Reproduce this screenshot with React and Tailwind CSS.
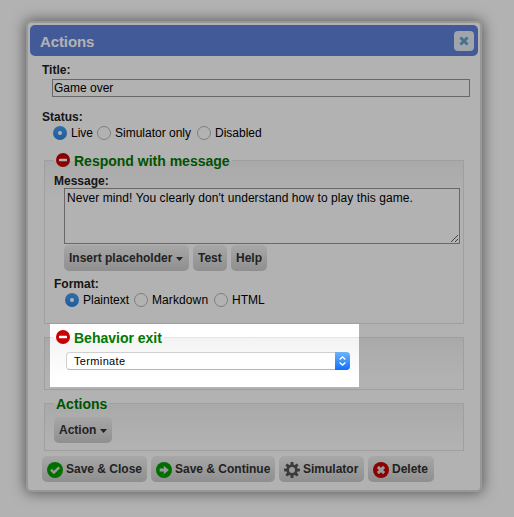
import React from "react";

function MinusIcon() {
  return (
    <svg className="block h-[14px] w-[14px] shrink-0" viewBox="0 0 14 14">
      <circle cx="7" cy="7" r="7" fill="#c80000" />
      <rect x="3" y="5.7" width="8" height="2.6" rx="0.6" fill="#fff" />
    </svg>
  );
}

function CheckIcon() {
  return (
    <svg className="mt-0.5 block h-4 w-4 shrink-0" viewBox="0 0 16 16">
      <circle cx="8" cy="8" r="8" fill="#00a000" />
      <path d="M4 7.7l2.9 2.9 5.3-5.2" fill="none" stroke="#ddd" strokeWidth="2.5" />
    </svg>
  );
}

function ArrowIcon() {
  return (
    <svg className="mt-0.5 block h-4 w-4 shrink-0" viewBox="0 0 16 16">
      <circle cx="8" cy="8" r="8" fill="#00a000" />
      <path d="M3.7 6.6h4.1V3.7L12.8 8l-5 4.3V9.4H3.7z" fill="#ddd" />
    </svg>
  );
}

function GearIcon() {
  return (
    <svg className="mt-0.5 block h-4 w-4 shrink-0" viewBox="0 0 16 16">
      <g fill="#555">
        {[0, 45, 90, 135].map((a) => (
          <path key={a} d="M6.7 0h2.6l.5 4h-3.6zM6.7 16h2.6l.5-4h-3.6z" transform={`rotate(${a} 8 8)`} />
        ))}
      </g>
      <circle cx="8" cy="8" r="4.3" fill="none" stroke="#555" strokeWidth="2.6" />
    </svg>
  );
}

function DeleteIcon() {
  return (
    <svg className="mt-0.5 block h-4 w-4 shrink-0" viewBox="0 0 16 16">
      <circle cx="8" cy="8" r="8" fill="#c80000" />
      <path d="M4.9 4.9l6.2 6.2M11.1 4.9l-6.2 6.2" stroke="#ddd" strokeWidth="2.9" />
    </svg>
  );
}

function Caret() {
  return (
    <svg className="mt-0.5 block h-1 w-[7px] shrink-0" viewBox="0 0 7 4">
      <path d="M0 0h7L3.5 4z" fill="#333" />
    </svg>
  );
}

function Button({ className, children }) {
  return (
    <button
      className={
        "flex h-[26px] shrink-0 items-center whitespace-nowrap rounded-[5px] bg-linear-to-b from-[#f0f0f0] to-[#cdcdcd] text-[12px] font-bold leading-[14px] text-[#323232] " +
        className
      }
    >
      {children}
    </button>
  );
}

function Radio({ checked, label, className }) {
  return (
    <label className={"flex h-[14px] shrink-0 items-center whitespace-nowrap text-[12px] leading-[14px] " + className}>
      <span
        className={
          "mr-1 flex h-[14px] w-[14px] shrink-0 items-center justify-center rounded-full " +
          (checked ? "bg-linear-to-b from-[#479fef] to-[#2e85e4]" : "border border-[#b6b6b6] bg-white")
        }
      >
        {checked && <span className="h-1 w-1 rounded-full bg-white" />}
      </span>
      {label}
    </label>
  );
}

function Panel({ title, icon, className, titleClass, children }) {
  return (
    <fieldset
      className={
        "ml-4 w-[420px] border border-[#e4e4e4] bg-linear-to-b from-[#f3f3f3] to-white to-[40px] " + className
      }
    >
      <legend className="ml-[9px] flex h-[15px] items-start whitespace-nowrap px-[2px] text-[14px] font-bold leading-4 text-[#007800]">
        {icon && <MinusIcon />}
        <span className={titleClass}>{title}</span>
      </legend>
      {children}
    </fieldset>
  );
}

export default function App() {
  return (
    <div className="relative h-[517px] w-[514px] overflow-hidden bg-white pl-[26px] pt-[21px] font-['Liberation_Sans',Arial,sans-serif] text-black">
      <div className="h-[471px] w-[456px] rounded-[5px] border-2 border-[#dadada] bg-white pt-[2px] shadow-[0_0_14px_1px_rgba(0,0,0,0.5)]">
        <header className="ml-[2px] flex h-[31px] w-[448px] items-center justify-between rounded-[5px] bg-[#6081dc] pl-[10px] pr-1">
          <h1 className="mt-px text-[15px] font-bold leading-[17px] tracking-[-0.1px] text-white">Actions</h1>
          <button className="mt-px flex h-5 w-5 items-center justify-center rounded-[4px] bg-[#e5edf6]">
            <svg className="block h-[10px] w-[10px]" viewBox="0 0 9 9">
              <path d="M1.3 1.3l6.4 6.4M7.7 1.3L1.3 7.7" stroke="#68a2cb" strokeWidth="2.7" />
            </svg>
          </button>
        </header>

        <p className="ml-[14px] mt-[7px] h-4 text-[12px] font-bold leading-[14px] text-[#222]">Title:</p>
        <div className="ml-6 flex h-[18px] w-[418px] items-center border border-[#969696] pl-px text-[12px] leading-[14px]">
          Game over
        </div>

        <p className="ml-[14px] mt-[13px] h-4 text-[12px] font-bold leading-[14px] text-[#222]">Status:</p>
        <div className="ml-[25px] flex">
          <Radio checked label="Live" className="w-11" />
          <Radio label="Simulator only" className="w-[100px]" />
          <Radio label="Disabled" className="" />
        </div>

        <Panel title="Respond with message" icon className="mt-[13px] h-[171px]" titleClass="ml-1">
          <p className="ml-[9px] mt-[6px] h-[14px] text-[12px] font-bold leading-[14px] text-[#222]">Message:</p>
          <div className="ml-[19px] flex h-14 w-[396px] justify-between border border-[#969696] bg-white">
            <p className="ml-[2px] mt-[2px] text-[12px] leading-[14px] tracking-[0.075px]">
              Never mind! You clearly don&apos;t understand how to play this game.
            </p>
            <svg className="mb-px mr-px mt-auto block h-[7px] w-[7px]" viewBox="0 0 7 7">
              <path d="M0 7L7 0M4 7l3-3" stroke="#555" strokeWidth="0.9" />
            </svg>
          </div>
          <div className="ml-[19px] mt-px flex gap-1">
            <Button className="w-[125px] gap-1 pl-[5px]">
              Insert placeholder
              <Caret />
            </Button>
            <Button className="w-[34px] pl-[5px]">Test</Button>
            <Button className="w-9 pl-[5px]">Help</Button>
          </div>
          <p className="ml-[9px] mt-[6px] h-4 text-[12px] font-bold leading-[14px] text-[#222]">Format:</p>
          <div className="ml-5 flex">
            <Radio checked label="Plaintext" className="w-[69px]" />
            <Radio label="Markdown" className="w-20 tracking-[0.1px]" />
            <Radio label="HTML" className="" />
          </div>
        </Panel>

        <Panel title="Behavior exit" icon className="mt-[6px] h-[60px]" titleClass="ml-1">
          <div className="ml-[21px] mt-[7px] flex h-[18px] w-[284px] items-center justify-between rounded-[4px] border border-b-[#b5b5b5] border-l-[#cfcfcf] border-r-[#cfcfcf] border-t-[#cfcfcf] bg-white pl-[7px] text-[11px] leading-[13px]">
            <span className="tracking-[0.35px]">Terminate</span>
            <span className="-my-px -mr-px flex h-[18px] w-[15px] items-center justify-center rounded-r-[4px] bg-linear-to-b from-[#6bb3fa] to-[#0b6ffb]">
              <svg className="block h-[10px] w-[7px]" viewBox="0 0 7 10">
                <path d="M.6 3.6L3.5.9l2.9 2.7M.6 6.4l2.9 2.7 2.9-2.7" fill="none" stroke="#fff" strokeWidth="1.3" />
              </svg>
            </span>
          </div>
        </Panel>

        <Panel title="Actions" className="mt-[6px] h-[55px]" titleClass="">
          <Button className="ml-[9px] mt-[6px] w-[58px] gap-1 pl-[5px]">
            Action
            <Caret />
          </Button>
        </Panel>

        <footer className="ml-[14px] mt-[5px] flex gap-1">
          <Button className="w-[105px] gap-[3px] pl-[5px]">
            <CheckIcon />
            Save &amp; Close
          </Button>
          <Button className="w-[124px] gap-[3px] pl-[5px]">
            <ArrowIcon />
            Save &amp; Continue
          </Button>
          <Button className="w-[85px] gap-[3px] pl-[5px]">
            <GearIcon />
            Simulator
          </Button>
          <Button className="w-[66px] gap-[3px] pl-[5px]">
            <DeleteIcon />
            Delete
          </Button>
        </footer>
      </div>

      {/* Spotlight that dims everything outside the behavior exit panel */}
      <div className="pointer-events-none absolute left-[50px] top-[324px] h-[63px] w-[309px] shadow-[0_0_0_600px_rgba(0,0,0,0.3)]" />
    </div>
  );
}
